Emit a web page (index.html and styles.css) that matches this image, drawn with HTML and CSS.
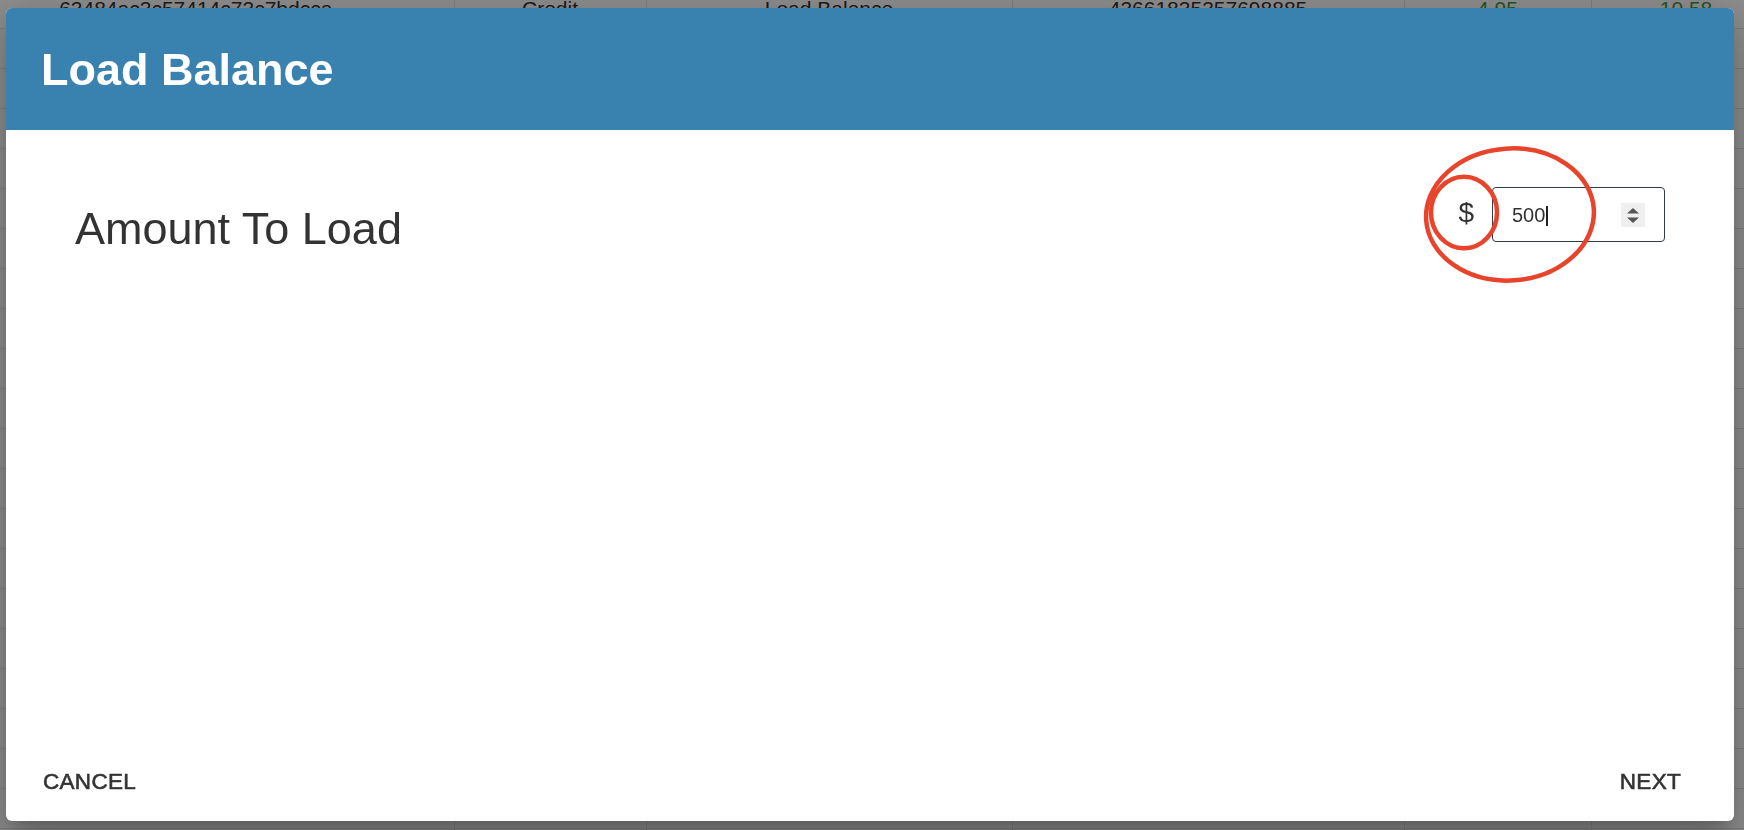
FILE: index.html
```html
<!DOCTYPE html>
<html lang="en">
<head>
<meta charset="utf-8">
<title>Load Balance</title>
<link rel="stylesheet" href="styles.css">
</head>
<body>
<div class="page">
  <table class="ledger">
    <colgroup>
      <col class="c-id"><col class="c-type"><col class="c-desc"><col class="c-ref"><col class="c-amt"><col class="c-bal">
    </colgroup>
    <tbody>
      <tr><td>63484ac3c57414c73c7bdcca</td><td>Credit</td><td>Load Balance</td><td>43661835357698885</td><td class="pos">4.95</td><td class="pos">10.58</td></tr>
      <tr><td></td><td></td><td></td><td></td><td></td><td></td></tr>
      <tr><td></td><td></td><td></td><td></td><td></td><td></td></tr>
      <tr><td></td><td></td><td></td><td></td><td></td><td></td></tr>
      <tr><td></td><td></td><td></td><td></td><td></td><td></td></tr>
      <tr><td></td><td></td><td></td><td></td><td></td><td></td></tr>
      <tr><td></td><td></td><td></td><td></td><td></td><td></td></tr>
      <tr><td></td><td></td><td></td><td></td><td></td><td></td></tr>
      <tr><td></td><td></td><td></td><td></td><td></td><td></td></tr>
      <tr><td></td><td></td><td></td><td></td><td></td><td></td></tr>
      <tr><td></td><td></td><td></td><td></td><td></td><td></td></tr>
      <tr><td></td><td></td><td></td><td></td><td></td><td></td></tr>
      <tr><td></td><td></td><td></td><td></td><td></td><td></td></tr>
      <tr><td></td><td></td><td></td><td></td><td></td><td></td></tr>
      <tr><td></td><td></td><td></td><td></td><td></td><td></td></tr>
      <tr><td></td><td></td><td></td><td></td><td></td><td></td></tr>
      <tr><td></td><td></td><td></td><td></td><td></td><td></td></tr>
      <tr><td></td><td></td><td></td><td></td><td></td><td></td></tr>
      <tr><td></td><td></td><td></td><td></td><td></td><td></td></tr>
      <tr><td></td><td></td><td></td><td></td><td></td><td></td></tr>
      <tr><td></td><td></td><td></td><td></td><td></td><td></td></tr>
      <tr><td></td><td></td><td></td><td></td><td></td><td></td></tr>
    </tbody>
  </table>
</div>

<div class="backdrop"></div>

<div class="dialog" role="dialog" aria-labelledby="dlg-title">
  <header class="dialog-header">
    <h1 id="dlg-title" class="dialog-title">Load Balance</h1>
  </header>
  <div class="dialog-body">
    <div class="field-label">Amount To Load</div>
    <div class="amount-group">
      <span class="currency">$</span>
      <div class="amount-input">
        <span class="amount-value">500</span><span class="caret"></span>
        <span class="spinner">
          <svg width="24" height="24" viewBox="0 0 24 24" aria-hidden="true">
            <polygon points="6,10.5 12,5 18,10.5" fill="#555"/>
            <polygon points="6,14.5 18,14.5 12,20" fill="#555"/>
          </svg>
        </span>
      </div>
    </div>
  </div>
  <footer class="dialog-actions">
    <button class="text-btn">CANCEL</button>
    <button class="text-btn">NEXT</button>
  </footer>
</div>

<svg class="annotation" width="1744" height="830" viewBox="0 0 1744 830" aria-hidden="true">
  <ellipse cx="1510" cy="214.5" rx="84" ry="66" transform="rotate(-4 1510 214.5)" fill="none" stroke="#e8432b" stroke-width="4.5"/>
  <ellipse cx="1464" cy="212.5" rx="33" ry="35.8" fill="none" stroke="#e8432b" stroke-width="4.5"/>
</svg>
</body>
</html>
```
FILE: styles.css
```css
html, body {
  margin: 0;
  padding: 0;
  height: 100%;
  overflow: hidden;
  background: #ffffff;
  font-family: "Liberation Sans", Arial, Helvetica, sans-serif;
}

.page {
  width: 100%;
  height: 100%;
  overflow: hidden;
}

.ledger {
  border-collapse: collapse;
  table-layout: fixed;
  width: 1843px;
  margin-left: -62px;
  margin-top: -11px;
  font-size: 21px;
  color: #333333;
}

.c-id { width: 516px; }
.c-type { width: 192px; }
.c-desc { width: 366px; }
.c-ref { width: 392px; }
.c-amt { width: 187px; }
.c-bal { width: 190px; }

.ledger td {
  height: 39px;
  padding: 0;
  text-align: center;
  white-space: nowrap;
  border-right: 1px solid #e4e4e4;
  border-bottom: 1px solid #e4e4e4;
}

.ledger td.pos {
  color: #3f9a3f;
}

.backdrop {
  position: fixed;
  inset: 0;
  background: rgba(0, 0, 0, 0.45);
}

.dialog {
  position: fixed;
  left: 6px;
  top: 8px;
  width: 1728px;
  height: 813px;
  background: #ffffff;
  border-radius: 6px;
  overflow: hidden;
  display: flex;
  flex-direction: column;
  box-shadow: 0 11px 15px -7px rgba(0, 0, 0, 0.2),
              0 24px 38px 3px rgba(0, 0, 0, 0.14),
              0 9px 46px 8px rgba(0, 0, 0, 0.12);
}

.dialog-header {
  height: 122px;
  flex: none;
  background: #3982b0;
  display: flex;
  align-items: center;
  padding-left: 35px;
}

.dialog-title {
  margin: 0;
  font-size: 45px;
  line-height: 1;
  font-weight: bold;
  color: #ffffff;
}

.dialog-body {
  display: flex;
  justify-content: space-between;
  align-items: flex-start;
  padding: 57px 69px 0 69px;
}

.field-label {
  margin-top: 19px;
  font-size: 45px;
  line-height: 1;
  color: #333333;
}

.amount-group {
  display: flex;
  align-items: center;
  gap: 18px;
}

.currency {
  font-size: 28px;
  line-height: 1;
  color: #333333;
  margin-bottom: 3px;
}

.amount-input {
  box-sizing: border-box;
  width: 173px;
  height: 55px;
  border: 1px solid #2f3b46;
  border-radius: 4px;
  display: flex;
  align-items: center;
  padding: 0 19px 0 19px;
}

.amount-value {
  font-size: 20px;
  line-height: 1;
  color: #333333;
}

.caret {
  width: 1.5px;
  height: 20px;
  background: #222222;
  margin-left: 1px;
  margin-top: 3px;
}

.spinner {
  margin-left: auto;
  width: 24px;
  height: 24px;
  background: #efefef;
  display: flex;
}

.dialog-actions {
  margin-top: auto;
  display: flex;
  justify-content: space-between;
  align-items: center;
  padding: 0 53px 28px 37px;
}

.text-btn {
  border: 0;
  background: transparent;
  padding: 0;
  margin: 0;
  font-family: "Liberation Sans", Arial, Helvetica, sans-serif;
  font-size: 22.5px;
  line-height: 1;
  letter-spacing: 0.3px;
  color: #333333;
  -webkit-text-stroke: 0.6px #333333;
  cursor: pointer;
}

.annotation {
  position: fixed;
  left: 0;
  top: 0;
  pointer-events: none;
}
```
